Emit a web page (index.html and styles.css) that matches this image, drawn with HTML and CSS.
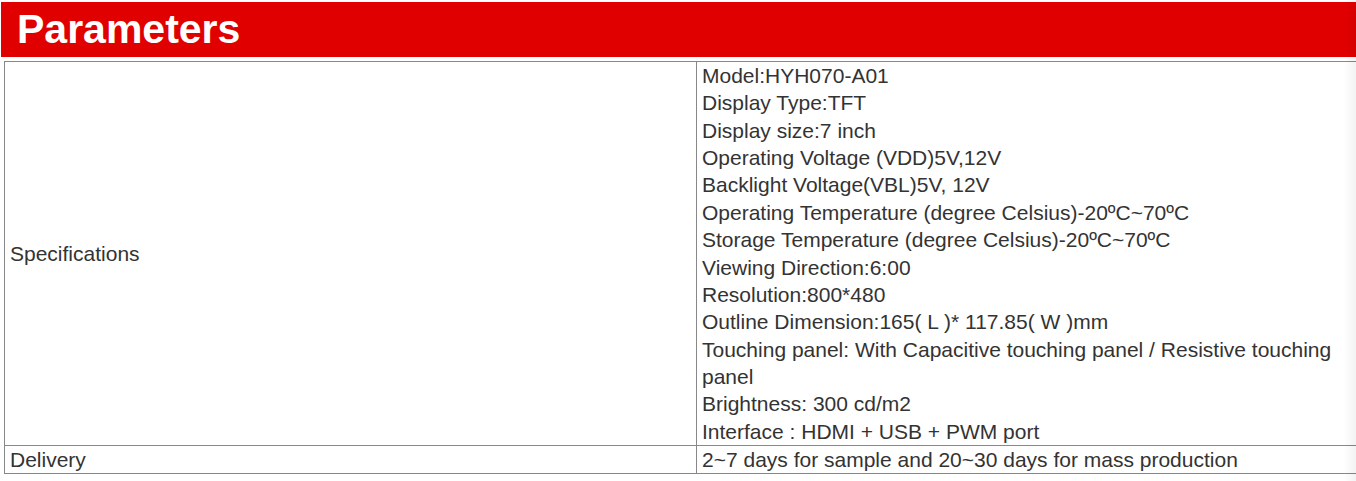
FILE: index.html
```html
<!DOCTYPE html>
<html lang="en">
<head>
  <meta charset="UTF-8" />
  <meta name="viewport" content="width=device-width, initial-scale=1.0"/>
  <title>Parameters</title>
  <link rel="stylesheet" href="styles.css">
</head>
<body>
  <div class="page">
    <h2 class="section-title">Parameters</h2>

    <table class="params">
      <tr>
        <td class="label">Specifications</td>
        <td class="value">
          Model:HYH070-A01<br>
          Display Type:TFT<br>
          Display size:7 inch<br>
          Operating Voltage (VDD)5V,12V<br>
          Backlight Voltage(VBL)5V, 12V<br>
          Operating Temperature (degree Celsius)-20ºC~70ºC<br>
          Storage Temperature (degree Celsius)-20ºC~70ºC<br>
          Viewing Direction:6:00<br>
          Resolution:800*480<br>
          Outline Dimension:165( L )* 117.85( W )mm<br>
          Touching panel: With Capacitive touching panel / Resistive touching panel<br>
          Brightness: 300 cd/m2<br>
          Interface : HDMI + USB + PWM port
        </td>
      </tr>
      <tr>
        <td class="label">Delivery</td>
        <td class="value">2~7 days for sample and 20~30 days for mass production</td>
      </tr>
    </table>

    <div class="edge-shade"></div>
  </div>
</body>
</html>
```

FILE: styles.css
```css
html, body {
  margin: 0;
  padding: 0;
  background: #fff;
  overflow: hidden;
}
.page {
  position: relative;
  width: 1356px;
  height: 481px;
  overflow: hidden;
  font-family: "Liberation Sans", Arial, sans-serif;
}
.section-title {
  margin: 2px 0 0 1px;
  height: 55px;
  padding-left: 16px;
  background: #e00000;
  color: #fff;
  font-size: 41px;
  font-weight: bold;
  line-height: 55px;
}
.params {
  margin: 4px 0 0 4px;
  width: 1376px;
  border-collapse: collapse;
  color: #333;
  font-size: 21px;
  line-height: 27.36px;
}
.params td {
  border: 1px solid #888;
  padding: 0 5px;
}
.params .label {
  width: 681px;
}
.edge-shade {
  position: absolute;
  top: 0;
  right: 0;
  width: 12px;
  height: 100%;
  background: linear-gradient(to right, rgba(0,0,0,0), rgba(0,0,0,0.05));
}
```
